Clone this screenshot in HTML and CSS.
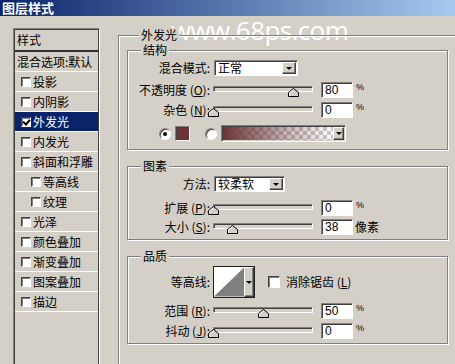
FILE: index.html
```html
<!DOCTYPE html>
<html lang="zh">
<head>
  <meta charset="UTF-8">
  <title>图层样式</title>
  <link rel="stylesheet" href="styles.css">
</head>
<body>
  <div class="titlebar">图层样式</div>
  <div class="watermark">www.68ps.com</div>

  <div class="dialog">
    <div class="style-list">
      <div class="list-head">样式</div>
      <div class="list-row">混合选项:默认</div>
      <div class="list-row"><span class="cb"></span>投影</div>
      <div class="list-row"><span class="cb"></span>内阴影</div>
      <div class="list-row selected"><span class="cb checked"></span>外发光</div>
      <div class="list-row"><span class="cb"></span>内发光</div>
      <div class="list-row"><span class="cb"></span>斜面和浮雕</div>
      <div class="list-row sub"><span class="cb"></span>等高线</div>
      <div class="list-row sub"><span class="cb"></span>纹理</div>
      <div class="list-row"><span class="cb"></span>光泽</div>
      <div class="list-row"><span class="cb"></span>颜色叠加</div>
      <div class="list-row"><span class="cb"></span>渐变叠加</div>
      <div class="list-row"><span class="cb"></span>图案叠加</div>
      <div class="list-row"><span class="cb"></span>描边</div>
    </div>

    <div class="panel">
      <div class="group outer">
        <div class="group-title">外发光</div>

        <!-- 结构 -->
        <div class="group g-structure">
          <div class="group-title">结构</div>
          <div class="field f-first">
            <label>混合模式:</label>
            <div class="select blend"><span>正常</span><i class="drop"></i></div>
          </div>
          <div class="field f-opacity">
            <label>不透明度 (<u>O</u>):</label>
            <div class="slider">
              <div class="track"></div>
              <svg class="thumb" style="left:75px" width="11" height="9" viewBox="0 0 11 9"><path d="M.5 8.5V4.5L5.5.5l5 4v4z" fill="#d4d0c8" stroke="#000"/><path d="M1.5 7.5V4.9L5.5 1.8" fill="none" stroke="#fff"/></svg>
            </div>
            <div class="num">80</div><span class="pct">%</span>
          </div>
          <div class="field f-next">
            <label>杂色 (<u>N</u>):</label>
            <div class="slider">
              <div class="track"></div>
              <svg class="thumb" style="left:-5px" width="11" height="9" viewBox="0 0 11 9"><path d="M.5 8.5V4.5L5.5.5l5 4v4z" fill="#d4d0c8" stroke="#000"/><path d="M1.5 7.5V4.9L5.5 1.8" fill="none" stroke="#fff"/></svg>
            </div>
            <div class="num">0</div><span class="pct">%</span>
          </div>
          <div class="color-row">
            <span class="radio on"></span>
            <span class="swatch"></span>
            <span class="radio second"></span>
            <div class="gradient"><span class="grad-fill"></span><i class="drop"></i></div>
          </div>
        </div>

        <!-- 图素 -->
        <div class="group g-elements">
          <div class="group-title">图素</div>
          <div class="field f-first">
            <label>方法:</label>
            <div class="select method"><span>较柔软</span><i class="drop"></i></div>
          </div>
          <div class="field f-spread">
            <label>扩展 (<u>P</u>):</label>
            <div class="slider">
              <div class="track"></div>
              <svg class="thumb" style="left:-5px" width="11" height="9" viewBox="0 0 11 9"><path d="M.5 8.5V4.5L5.5.5l5 4v4z" fill="#d4d0c8" stroke="#000"/><path d="M1.5 7.5V4.9L5.5 1.8" fill="none" stroke="#fff"/></svg>
            </div>
            <div class="num">0</div><span class="pct">%</span>
          </div>
          <div class="field f-size">
            <label>大小 (<u>S</u>):</label>
            <div class="slider">
              <div class="track"></div>
              <svg class="thumb" style="left:14px" width="11" height="9" viewBox="0 0 11 9"><path d="M.5 8.5V4.5L5.5.5l5 4v4z" fill="#d4d0c8" stroke="#000"/><path d="M1.5 7.5V4.9L5.5 1.8" fill="none" stroke="#fff"/></svg>
            </div>
            <div class="num">38</div><span class="unit">像素</span>
          </div>
        </div>

        <!-- 品质 -->
        <div class="group g-quality">
          <div class="group-title">品质</div>
          <div class="field contour-row">
            <label>等高线:</label>
            <div class="contour">
              <svg width="31" height="30" viewBox="0 0 31 30"><path d="M0 30L31 0V30z" fill="#808080"/></svg>
              <i class="drop"></i>
            </div>
            <span class="cb big"></span>
            <span class="cb-label">消除锯齿 (<u>L</u>)</span>
          </div>
          <div class="field f-range">
            <label>范围 (<u>R</u>):</label>
            <div class="slider">
              <div class="track"></div>
              <svg class="thumb" style="left:45px" width="11" height="9" viewBox="0 0 11 9"><path d="M.5 8.5V4.5L5.5.5l5 4v4z" fill="#d4d0c8" stroke="#000"/><path d="M1.5 7.5V4.9L5.5 1.8" fill="none" stroke="#fff"/></svg>
            </div>
            <div class="num">50</div><span class="pct">%</span>
          </div>
          <div class="field f-next">
            <label>抖动 (<u>J</u>):</label>
            <div class="slider">
              <div class="track"></div>
              <svg class="thumb" style="left:-5px" width="11" height="9" viewBox="0 0 11 9"><path d="M.5 8.5V4.5L5.5.5l5 4v4z" fill="#d4d0c8" stroke="#000"/><path d="M1.5 7.5V4.9L5.5 1.8" fill="none" stroke="#fff"/></svg>
            </div>
            <div class="num">0</div><span class="pct">%</span>
          </div>
        </div>
      </div>
    </div>
  </div>
</body>
</html>
```

FILE: styles.css
```css
* {
  box-sizing: border-box;
}

body {
  margin: 0;
  width: 455px;
  height: 364px;
  overflow: hidden;
  position: relative;
  background: #d4d0c8;
  color: #000;
  font: 12px/14px "Noto Sans CJK SC", sans-serif;
}

.titlebar {
  height: 16px;
  padding-left: 2px;
  background: linear-gradient(to right, #0a246a, #a6caf0);
  color: #fff;
  font-weight: bold;
  font-size: 13px;
  line-height: 16px;
}

/* watermark, sits under the group border line */
.watermark {
  position: absolute;
  z-index: 0;
  left: 171px;
  top: 17px;
  font-family: "Open Sans", sans-serif;
  font-weight: 400;
  font-size: 26px;
  line-height: 26px;
  letter-spacing: -0.6px;
  color: #fff;
}

.dialog {
  display: flex;
  align-items: flex-start;
  padding: 12px 0 0 13px;
}

/* left list */
.style-list {
  flex: none;
  width: 87px;
  height: 340px;
  padding: 1px;
  border: 1px solid;
  border-color: #808080 #fff #fff #808080;
  box-shadow: inset 1px 1px 0 #404040, inset -1px -1px 0 #404040;
}

.list-head {
  height: 22px;
  padding-left: 2px;
  line-height: 20px;
  border-bottom: 2px solid #303030;
}

.list-row {
  display: flex;
  align-items: center;
  gap: 2px;
  height: 20px;
  padding-left: 2px;
  border-bottom: 1px solid #fff;
  white-space: nowrap;
}

.list-row .cb {
  margin-left: 4px;
}

.list-row.sub .cb {
  margin-left: 14px;
}

.list-row.selected {
  background: #0a246a;
  color: #fff;
}

.cb {
  flex: none;
  width: 10px;
  height: 10px;
  background: #fff;
  border: 1px solid;
  border-color: #404040 #fff #fff #404040;
  box-shadow: inset 1px 1px 0 #808080;
  position: relative;
}

.cb.checked::after {
  content: "";
  position: absolute;
  left: 2px;
  top: 0;
  width: 3px;
  height: 5px;
  border: solid #000;
  border-width: 0 2px 2px 0;
  transform: rotate(40deg);
}

.cb.big {
  width: 12px;
  height: 12px;
  margin-left: 13px;
}

.cb-label {
  margin-left: 6px;
  white-space: nowrap;
}

/* group boxes */
.panel {
  position: relative;
  z-index: 1;
  margin: 7px 0 0 18px;
}

.group {
  border: 1px solid #808080;
  box-shadow: 1px 1px 0 #fff, inset 1px 1px 0 #fff;
}

.group.outer {
  width: 360px;
  height: 340px;
  padding-left: 8px;
}

.group-title {
  width: fit-content;
  margin: -8px 0 0 13px;
  padding: 0 2px;
  background: #d4d0c8;
  line-height: 14px;
}

.outer > .group-title {
  margin-left: 12px;
}

.g-structure {
  width: 321px;
  margin-top: 8px;
  padding-bottom: 7px;
}

.g-elements {
  width: 321px;
  margin-top: 16px;
  padding-bottom: 4px;
}

.g-quality {
  width: 321px;
  margin-top: 16px;
  padding-bottom: 4px;
}

/* rows */
.field {
  display: flex;
  align-items: center;
  height: 16px;
}

.field label {
  flex: none;
  width: 82px;
  margin-right: 4px;
  text-align: right;
  white-space: nowrap;
}

.f-first { margin-top: 3px; }
.f-opacity { margin-top: 6px; }
.f-next { margin-top: 4px; }
.f-spread { margin-top: 8px; }
.f-size { margin-top: 3px; }
.f-range { margin-top: 5px; }

.contour-row {
  height: 32px;
  margin-top: 3px;
}

.select {
  display: flex;
  align-items: center;
  height: 16px;
  padding: 0 1px 0 3px;
  background: #fff;
  border: 1px solid;
  border-color: #808080 #fff #fff #808080;
  box-shadow: inset 1px 1px 0 #404040;
}

.select span {
  flex: 1;
}

.select.blend { width: 84px; }
.select.method { width: 71px; }

.drop {
  flex: none;
  display: flex;
  align-items: center;
  justify-content: center;
  width: 14px;
  height: 12px;
  background: #d4d0c8;
  border: 1px solid;
  border-color: #fff #404040 #404040 #fff;
  box-shadow: inset -1px -1px 0 #808080;
}

.drop::after {
  content: "";
  border: 3px solid transparent;
  border-top: 3px solid #000;
  border-bottom: 0;
}

/* sliders */
.slider {
  position: relative;
  flex: none;
  width: 100px;
  height: 16px;
  margin-left: -1px;
}

.track {
  height: 6px;
  margin-top: 4px;
  border: 1px solid;
  border-color: #808080 #fff #fff #808080;
  box-shadow: inset 1px 1px 0 #404040;
  background: #d4d0c8;
}

.thumb {
  position: absolute;
  top: 6px;
  display: block;
}

.num {
  flex: none;
  width: 32px;
  height: 16px;
  margin-left: 8px;
  padding-left: 3px;
  background: #fff;
  border: 1px solid;
  border-color: #808080 #fff #fff #808080;
  box-shadow: inset 1px 1px 0 #404040;
  font-family: "Liberation Sans", sans-serif;
  font-size: 12px;
  line-height: 14px;
}

.pct {
  align-self: flex-start;
  margin-left: 3px;
  font-family: "Liberation Sans", sans-serif;
  font-size: 9px;
  line-height: 11px;
}

.unit {
  margin-left: 2px;
}

/* colour row */
.color-row {
  display: flex;
  align-items: center;
  height: 17px;
  margin-top: 7px;
  padding-left: 31px;
}

.radio {
  position: relative;
  flex: none;
  width: 12px;
  height: 12px;
  border-radius: 50%;
  background: #fff;
  border: 1px solid;
  border-color: #808080 #fff #fff #808080;
  box-shadow: inset 1px 1px 0 #404040;
}

.radio.on::after {
  content: "";
  position: absolute;
  left: 3px;
  top: 3px;
  width: 4px;
  height: 4px;
  border-radius: 50%;
  background: #000;
}

.radio.second {
  margin-left: 15px;
}

.swatch {
  flex: none;
  width: 15px;
  height: 15px;
  margin-left: 4px;
  background: #6b3437;
  border: 1px solid;
  border-color: #808080 #fff #fff #808080;
  box-shadow: inset 1px 1px 0 #404040;
}

.gradient {
  display: flex;
  align-items: center;
  width: 125px;
  height: 17px;
  margin-left: 4px;
  padding: 1px;
  border: 1px solid;
  border-color: #808080 #fff #fff #808080;
  box-shadow: inset 1px 1px 0 #404040;
  background: #d4d0c8;
}

.grad-fill {
  flex: 1;
  height: 100%;
  background:
    linear-gradient(to right, #6b3437, rgba(107, 52, 55, 0.35) 60%, rgba(107, 52, 55, 0)),
    repeating-conic-gradient(#c8c8c8 0 25%, #fff 0 50%) 0 0 / 8px 8px;
}

.gradient .drop {
  width: 11px;
  height: 13px;
}

/* contour picker */
.contour {
  display: flex;
  width: 42px;
  height: 32px;
  margin-left: -1px;
  border: 1px solid #202020;
  background: #fff;
}

.contour svg {
  display: block;
}

.contour .drop {
  width: 10px;
  height: 30px;
}
```
